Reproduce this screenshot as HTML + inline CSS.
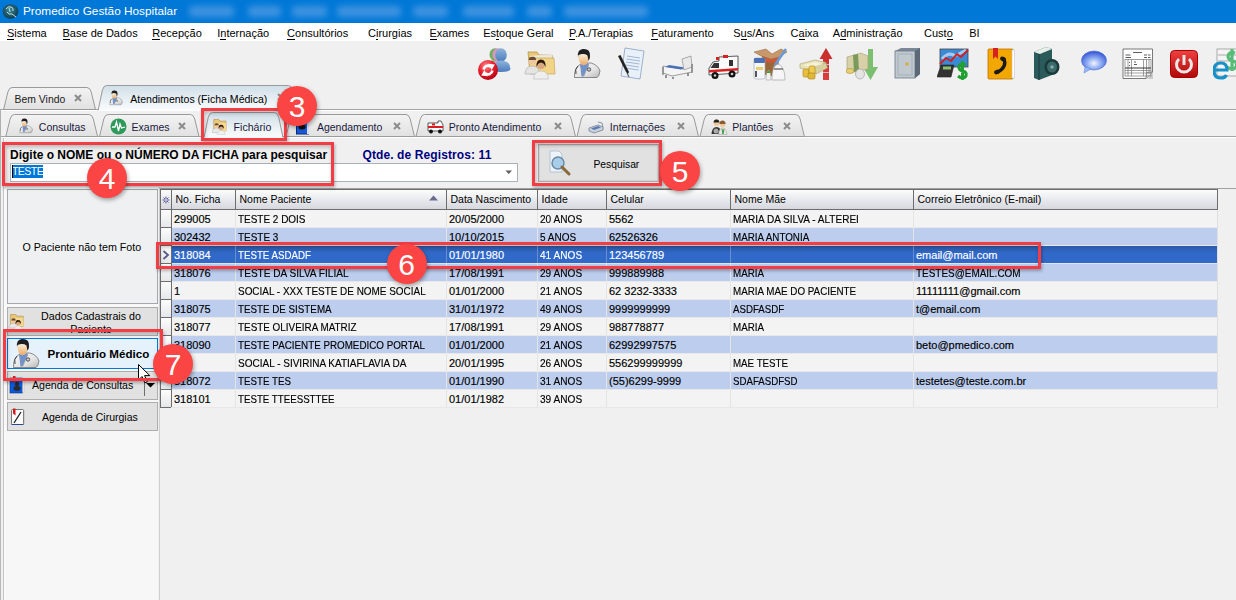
<!DOCTYPE html>
<html><head><meta charset="utf-8">
<style>
*{box-sizing:border-box;margin:0;padding:0}
html,body{width:1236px;height:600px;overflow:hidden;background:#f0f0f0;font-family:"Liberation Sans",sans-serif;position:relative}
.a{position:absolute;white-space:pre}
#title{left:0;top:0;width:1236px;height:23px;background:#0078d7}
#menu{left:0;top:23px;width:1236px;height:18px;background:#fff}
.mi{position:absolute;top:24.5px;font-size:11px;color:#000;line-height:16px}
.mi u{text-decoration:none;border-bottom:1px solid #000}
.tb{position:absolute;top:47px;width:32px;height:32px}
.tt{font-size:10.6px;color:#1a1a3a;line-height:13px}
.x{position:absolute;font-size:11px;font-weight:bold;color:#8a8a8a;line-height:11px}
.gh{position:absolute;top:190px;height:19px;font-size:10.5px;line-height:19px;color:#000;padding-left:4px}
.row{position:absolute;left:171px;width:1046px;height:18px}
.c{position:absolute;font-size:11px;line-height:18px;top:0;color:#000;-webkit-text-stroke:0.15px currentColor}
.ann{position:absolute;width:40px;height:40px;border-radius:50%;background:#fb4343;color:#fff;font-size:29px;line-height:40px;text-align:center;box-shadow:1px 2px 3px rgba(0,0,0,.35)}
.rb{position:absolute;border:3px solid #f2404a}
</style></head><body>
<!-- title bar -->
<div class="a" id="title"></div>
<svg class="a" style="left:2px;top:3px" width="17" height="17" viewBox="0 0 17 17"><defs><radialGradient id="gl" cx=".45" cy=".4" r=".6"><stop offset="0" stop-color="#3a8a9a"/><stop offset="1" stop-color="#0e3a4a"/></radialGradient></defs><ellipse cx="8.5" cy="8.5" rx="7.8" ry="7.3" fill="url(#gl)"/><path d="M4 6 Q6 3 9 4 Q12 5 11 8 M5 9 Q7 12 10 11 L14 14 M7 5 L8 9" stroke="#d8eef0" stroke-width="0.9" fill="none"/></svg>
<div class="a" style="left:23px;top:4px;font-size:11.8px;color:#fff;line-height:14px">Promedico Gestão Hospitalar</div>
<div class="a" style="left:0;top:0;width:1236px;height:23px;filter:blur(3.2px)">
  <div class="a" style="left:189px;top:6px;width:45px;height:11px;background:#3e93e0;border-radius:4px"></div>
  <div class="a" style="left:248px;top:6px;width:33px;height:11px;background:#3e93e0;border-radius:4px"></div>
  <div class="a" style="left:292px;top:6px;width:35px;height:11px;background:#3e93e0;border-radius:4px"></div>
  <div class="a" style="left:337px;top:6px;width:64px;height:11px;background:#3e93e0;border-radius:4px"></div>
  <div class="a" style="left:413px;top:6px;width:35px;height:11px;background:#3e93e0;border-radius:4px"></div>
  <div class="a" style="left:463px;top:6px;width:51px;height:11px;background:#3e93e0;border-radius:4px"></div>
  <div class="a" style="left:527px;top:6px;width:25px;height:11px;background:#3e93e0;border-radius:4px"></div>
  <div class="a" style="left:564px;top:6px;width:84px;height:11px;background:#3e93e0;border-radius:4px"></div>
</div>
<!-- menu -->
<div class="a" id="menu"></div>
<div class="mi" style="left:7px"><u>S</u>istema</div>
<div class="mi" style="left:62.5px"><u>B</u>ase de Dados</div>
<div class="mi" style="left:152.3px"><u>R</u>ecepção</div>
<div class="mi" style="left:217.2px">I<u>n</u>ternação</div>
<div class="mi" style="left:287.1px"><u>C</u>onsultórios</div>
<div class="mi" style="left:368px">C<u>i</u>rurgias</div>
<div class="mi" style="left:429.5px"><u>E</u>xames</div>
<div class="mi" style="left:483.2px">Es<u>t</u>oque Geral</div>
<div class="mi" style="left:569px"><u>P</u>.A./Terapias</div>
<div class="mi" style="left:651.2px"><u>F</u>aturamento</div>
<div class="mi" style="left:733.2px">S<u>u</u>s/Ans</div>
<div class="mi" style="left:790.6px">C<u>a</u>ixa</div>
<div class="mi" style="left:832.8px">A<u>d</u>ministração</div>
<div class="mi" style="left:924px">Cust<u>o</u></div>
<div class="mi" style="left:969.2px">BI</div>

<!-- toolbar icons -->
<svg class="a" style="left:478px;top:47px" width="33" height="34" viewBox="0 0 33 34"><defs><radialGradient id="rr" cx=".4" cy=".3" r=".75"><stop offset="0" stop-color="#ff8a8a"/><stop offset=".5" stop-color="#e82030"/><stop offset="1" stop-color="#b00010"/></radialGradient><linearGradient id="bp" x1="0" y1="0" x2="0" y2="1"><stop offset="0" stop-color="#90b4dc"/><stop offset="1" stop-color="#4a7cbc"/></linearGradient></defs>
<g fill="#72b060"><ellipse cx="17" cy="7.5" rx="5.5" ry="6.3"/><path d="M9.5 23 Q9 13.5 17 13 Q25 13.5 25 23 Z"/></g>
<g fill="#d898c0"><ellipse cx="20" cy="7.5" rx="5.5" ry="6.3"/><path d="M12.5 23 Q12 13.5 20 13 Q28 13.5 28 23 Z"/></g>
<g fill="url(#bp)"><ellipse cx="23" cy="8" rx="5.8" ry="6.8"/><path d="M15.5 24.5 Q15 14 23 13.5 Q32.5 14 32.5 22 Q32 25 23 25 Z"/></g>
<circle cx="10" cy="23" r="10" fill="url(#rr)"/>
<path d="M5.6 22.5 A4.4 4.4 0 0 1 12.6 19.6" stroke="#fff" stroke-width="2.6" fill="none"/><path d="M10.2 16.8 L16.8 17.6 L13.6 23 Z" fill="#fff"/><path d="M14.4 23.5 A4.4 4.4 0 0 1 7.4 26.4" stroke="#fff" stroke-width="2.6" fill="none"/><path d="M9.8 29.2 L3.2 28.4 L6.4 23 Z" fill="#fff"/></svg>
<svg class="a" style="left:524px;top:47px" width="33" height="33" viewBox="0 0 33 33"><path d="M4 5 L13 5 L15 8 L28 8 L30 26 L6 26 Z" fill="#e9c878" stroke="#b8944a" stroke-width="0.8"/>
<path d="M6 9 L28 7 L29 25 L7 26 Z" fill="#f0f0f0" opacity=".8"/><path d="M5 11 L30 11 L31 27 L6 27 Z" fill="#f2d488" stroke="#c0a050" stroke-width="0.6"/>
<circle cx="8.5" cy="14" r="3.8" fill="#f0c8a0"/><path d="M4.8 13 Q5 9.5 8.5 9.8 Q12 9.5 12 13 Z" fill="#6a4a30"/><path d="M1 27 Q1.5 19 8.5 19 Q15 19 15.5 27 Z" fill="#e4e4e4" stroke="#aaa" stroke-width="0.6"/>
<circle cx="17" cy="18" r="4" fill="#d8a880"/><path d="M12.5 20 Q12 12.5 17 12.5 Q22 12.5 21.5 20 L20 17 Q17 14 14 17 Z" fill="#2a1a10"/><path d="M9.5 32 Q10 24 17 24 Q24 24 24.5 32 Z" fill="#eee" stroke="#bbb" stroke-width="0.6"/></svg>
<svg class="a" style="left:569px;top:46px" width="36.0" height="34.0" viewBox="0 0 36 34"><defs><linearGradient id="coat1" x1="0" y1="0" x2="1" y2="1"><stop offset="0" stop-color="#fafafa"/><stop offset=".6" stop-color="#e4e4e4"/><stop offset="1" stop-color="#b8b8b8"/></linearGradient><linearGradient id="face1" x1="0" y1="0" x2="0" y2="1"><stop offset="0" stop-color="#fbe8c8"/><stop offset="1" stop-color="#e8a868"/></linearGradient></defs><path d="M5.5 31.5 Q5 22 11 18.5 L15 17 L22 17 Q29 19 31 25 Q30 31 28 31.5 Z" fill="url(#coat1)" stroke="#606060" stroke-width="0.7"/><path d="M11 18.5 L19 17 L20 19 L14.5 30.5 L12.5 30.5 Z" fill="#6d90d0"/><path d="M11 18.5 L15 30 M19.5 17.5 L15 30" stroke="#9a9a9a" stroke-width="0.6" fill="none"/><path d="M9 20 Q5.5 23 7 28" stroke="#404040" stroke-width="1" fill="none"/><circle cx="20" cy="23.5" r="1.7" fill="#d0d0d0" stroke="#404040" stroke-width="0.9"/><path d="M9.5 9 Q9 16 13 19 Q17 20 19 16 L19 9 Z" fill="url(#face1)"/><path d="M9 11 Q8 3.5 14 3 Q21 2.5 21 9 Q21.5 12 19.5 15 L18.5 9.5 Q15 7 9.5 9 Z" fill="#1e1e1e"/></svg>
<svg class="a" style="left:616px;top:47px" width="30" height="33" viewBox="0 0 30 33"><path d="M9 1 L28 4 L24 32 L5 29 Z" fill="#e8f0fa" stroke="#8aa0c0" stroke-width="0.8"/>
<g stroke="#9ab0cc" stroke-width="0.9"><path d="M11 9 L24 11 M10.5 12 L24 14 M10 15 L23.5 17 M9.5 18 L23 20 M9 21 L22.5 23"/></g>
<path d="M2 9 L4.5 8 L13 25 L12 27 L10 25 Z" fill="#222"/><path d="M11 26 L13 30" stroke="#444"/></svg>
<svg class="a" style="left:661px;top:55px" width="33" height="25" viewBox="0 0 33 25"><path d="M2 11 L22 14 L31 9 L31 17 L11 21 L2 18 Z" fill="#f4f4f4" stroke="#888" stroke-width="0.8"/>
<path d="M4 12 L20 14.5 L24 12.5 L8 10 Z" fill="#4a70b8"/><path d="M21 4 L30 1 L31 12 L23 15 Z" fill="#e8e8e8" stroke="#999" stroke-width="0.8"/>
<path d="M2 12 L2 20 M31 9 L31 18" stroke="#777" stroke-width="1.2"/><path d="M5 20 L5 23 M27 18 L27 21 M12 22 L12 24" stroke="#555" stroke-width="1.2"/></svg>
<svg class="a" style="left:707px;top:53px" width="33" height="28" viewBox="0 0 33 28"><path d="M12 4 L31 3 L31 20 L2 22 L2 15 L6 9 L12 8 Z" fill="#fafafa" stroke="#333" stroke-width="0.8"/>
<path d="M3.5 15 L7 10 L12 10 L12 15 Z" fill="#333"/><rect x="22" y="7" width="4" height="6" fill="#333"/>
<path d="M2 17 L31 15 L31 17.5 L2 19.5 Z" fill="#d82020"/><rect x="16" y="2" width="5" height="3" fill="#d82020"/><rect x="9" y="4" width="3" height="3" fill="#d82020"/>
<circle cx="8" cy="22.5" r="3.5" fill="#111"/><circle cx="25" cy="21" r="3.5" fill="#111"/><circle cx="8" cy="22.5" r="1.3" fill="#ccc"/><circle cx="25" cy="21" r="1.3" fill="#ccc"/></svg>
<svg class="a" style="left:753px;top:47px" width="34" height="34" viewBox="0 0 34 34"><path d="M1 5 L13 2 L19 7 L28 2 L34 5 L26 10 L18 12 L8 9 Z" fill="#c8986a" stroke="#8a6038" stroke-width="0.5"/>
<path d="M9 9 L18 12 L26 10 L25 25 L17 30 L10 27 Z" fill="#9a6838"/><path d="M11 10 L18 12.5 L25.5 10.5 L25.5 14 L18 16 L11 14 Z" fill="#d0583a"/>
<path d="M33 2 L22 18" stroke="#6a9ad8" stroke-width="2.6"/><path d="M22 18 L20 21" stroke="#aaa" stroke-width="1"/>
<rect x="1" y="11" width="11" height="21" rx="2" fill="#f4f6fa" stroke="#a0a8b0" stroke-width="0.6"/><rect x="1" y="11" width="11" height="5" rx="1" fill="#4a70b8"/><rect x="3" y="20" width="7" height="3" fill="#e8d070"/><rect x="2" y="24" width="2" height="6" fill="#555"/>
<path d="M13 33 Q13 25 15.5 23 Q18 25 18 33 Z" fill="#f0f0f0" stroke="#999" stroke-width="0.5"/><path d="M13.5 26 Q15.5 21 17.5 26 Z" fill="#40a040"/>
<path d="M19 33 Q18.5 19 25 17 Q32 19 32 33 Z" fill="#f6f6f6" stroke="#999" stroke-width="0.6"/><path d="M21 22 H30" stroke="#333" stroke-width="1"/></svg>
<svg class="a" style="left:799px;top:47px" width="34" height="34" viewBox="0 0 34 34"><defs><linearGradient id="ar" x1="0" y1="0" x2="0" y2="1"><stop offset="0" stop-color="#c82828"/><stop offset="1" stop-color="#d84040"/></linearGradient></defs>
<path d="M27 1 L33.5 12 L30 12 L30 33 L24 33 L24 12 L20.5 12 Z" fill="url(#ar)"/><path d="M24 17.5 H30 M24 25.5 H30" stroke="#e8b0b0" stroke-width="1"/>
<path d="M1 17 L16 13 L27 15.5 L27 19 L12 24 L1 21 Z" fill="#e8e2b8" stroke="#a8a070" stroke-width="0.6"/><path d="M12 20 L27 16 L28.5 21 L17 27 Z" fill="#d8d0a0" stroke="#a8a070" stroke-width="0.6"/>
<path d="M4 18 L16 15 L24 17 L12 20.5 Z" fill="#f4f0d8"/>
<rect x="4" y="22" width="6" height="8" rx="1.5" fill="#e8c040" stroke="#a88010" stroke-width="0.6"/><rect x="10" y="19" width="6" height="9" rx="1.5" fill="#f0cc50" stroke="#a88010" stroke-width="0.6"/><rect x="9" y="26" width="7" height="6" rx="1.5" fill="#e0b838" stroke="#a88010" stroke-width="0.6"/></svg>
<svg class="a" style="left:846px;top:49px" width="33" height="31" viewBox="0 0 33 31"><path d="M22 0 L27 0 L27 18 L32 18 L24.5 31 L17 18 L22 18 Z" fill="#7ac070"/>
<path d="M1 8 L15 4 L22 7 L22 20 L8 23 L1 20 Z" fill="#d8d0a8" stroke="#a89870" stroke-width="0.6"/><path d="M7 6 L12 5 L13 22 L8 23 Z" fill="#7a9a5a"/>
<ellipse cx="4" cy="22" rx="4" ry="2.5" fill="#e8d070" stroke="#a89040" stroke-width="0.6"/><ellipse cx="14" cy="25" rx="4.5" ry="5" fill="#e4e4e4" stroke="#999" stroke-width="0.6"/></svg>
<svg class="a" style="left:893px;top:47px" width="29" height="32" viewBox="0 0 29 32"><path d="M2 4 L8 1 L27 1 L27 27 L22 31 L2 31 Z" fill="#7a8898"/><rect x="2" y="4" width="20" height="27" fill="#c0c8d0" stroke="#6a7888" stroke-width="0.8"/>
<path d="M22 4 L27 1 L27 27 L22 31 Z" fill="#5a6878"/><rect x="5" y="7" width="14" height="21" fill="none" stroke="#a0a8b0" stroke-width="0.8"/><circle cx="14" cy="17" r="1.8" fill="#d8b040"/></svg>
<svg class="a" style="left:937px;top:47px" width="34" height="33" viewBox="0 0 34 33"><rect x="3" y="2" width="28" height="18" fill="#3a8ad8" stroke="#444" stroke-width="0.8"/><path d="M5 12 Q12 4 18 9 Q24 6 29 3" stroke="#e8f4ff" stroke-width="3" fill="none" opacity=".6"/>
<path d="M3 17 L9 11 L14 14 L20 7 L24 10 L31 3" stroke="#d02020" stroke-width="2" fill="none"/>
<path d="M0 30 L4 18 L17 18 L14 30 Z" fill="#333" stroke="#222" stroke-width="0.6"/><rect x="6" y="19.5" width="8" height="3" fill="#8ac070"/>
<path d="M29 18 Q24 15 22 19 Q21 23 26 24 Q30 25 29 29 Q26 33 21 29 M25.5 14 L25.5 33" stroke="#20a030" stroke-width="3" fill="none"/></svg>
<svg class="a" style="left:987px;top:48px" width="28" height="32" viewBox="0 0 28 32"><rect x="1" y="1" width="25" height="30" rx="1" fill="#f2a800" stroke="#c07000" stroke-width="0.8"/><rect x="25" y="2" width="2.5" height="28" fill="#fff" stroke="#bbb" stroke-width="0.5"/>
<path d="M6 0 L11 0 L11 11 L8.5 8.5 L6 11 Z" fill="#d82020"/>
<path d="M16.5 10.5 Q21 18 10.5 24.5" stroke="#1a1a1a" stroke-width="3.2" fill="none"/><ellipse cx="16" cy="11" rx="3" ry="2.2" fill="#1a1a1a" transform="rotate(30 16 11)"/><ellipse cx="10" cy="24" rx="3" ry="2.2" fill="#1a1a1a" transform="rotate(-20 10 24)"/></svg>
<svg class="a" style="left:1033px;top:47px" width="27" height="33" viewBox="0 0 27 33"><path d="M1 5 L13 0 L19 2 L19 28 L6 33 L1 31 Z" fill="#2a5a5a"/><path d="M1 5 L13 0 L19 2 L7 7 Z" fill="#e8eee8"/><path d="M6 7 L6 33" stroke="#1a3a3a"/>
<ellipse cx="19" cy="20" rx="7.5" ry="8" fill="#1a3a3a"/><ellipse cx="19" cy="20" rx="5" ry="5.5" fill="#3a6a6a"/><circle cx="19" cy="20" r="1.8" fill="#88aaaa"/></svg>
<svg class="a" style="left:1080px;top:50px" width="27" height="25" viewBox="0 0 27 25"><defs><radialGradient id="sb" cx=".5" cy=".65" r=".6"><stop offset="0" stop-color="#f0f4ff"/><stop offset=".5" stop-color="#8aa8f0"/><stop offset="1" stop-color="#3a5ad8"/></radialGradient></defs>
<ellipse cx="14" cy="10.5" rx="12.5" ry="9.5" fill="url(#sb)" stroke="#4a6ad8" stroke-width="0.6"/><path d="M5 17 L4 23 L11 19 Z" fill="#9ab8f4" stroke="#6a8ae0" stroke-width="0.6"/></svg>
<svg class="a" style="left:1122px;top:48px" width="32" height="32" viewBox="0 0 32 32"><path d="M1 1 L30.5 1 L30.5 24 L24 30.5 L1 30.5 Z" fill="#fff" stroke="#6a6a6a" stroke-width="0.9"/><path d="M24 30.5 L24.5 24.5 L30.5 24" fill="#e8e8e8" stroke="#6a6a6a" stroke-width="0.8"/><path d="M25 31 L31 25 L31 31 Z" fill="#ccc"/>
<g stroke="#333" stroke-width="0.8"><path d="M11 4.5 H20 M3.5 7 H8.5 M3.5 9.5 H9 M22 7 H25 M26 7 H28.5 M22 9.5 H25 M26 9.5 H28.5"/></g>
<g stroke="#777" stroke-width="0.7" fill="none"><rect x="3" y="11.5" width="26" height="16.5"/><path d="M6 11.5 V28 M9.5 11.5 V28 M21.5 11.5 V28 M24.5 11.5 V24 M27 11.5 V24 M3 22.5 H29 M3 25 H29"/></g>
<path d="M3 20 H29" stroke="#333" stroke-width="1"/><path d="M7.5 14 V15 M7.5 17 V18 M12 14 H14 M12 16.5 H15" stroke="#333" stroke-width="0.8"/></svg>
<svg class="a" style="left:1170px;top:50px" width="28" height="28" viewBox="0 0 28 28"><defs><linearGradient id="pw" x1="0" y1="0" x2="0" y2="1"><stop offset="0" stop-color="#f04040"/><stop offset="1" stop-color="#b00808"/></linearGradient></defs>
<rect x="0.5" y="0.5" width="27" height="27" rx="4" fill="url(#pw)" stroke="#a00"/><path d="M9 9 A7.5 7.5 0 1 0 19 9" stroke="#e8e8e8" stroke-width="3" fill="none"/><rect x="12.5" y="5" width="3" height="10" fill="#e8e8e8"/></svg>
<svg class="a" style="left:1213px;top:47px" width="23" height="33" viewBox="0 0 23 33"><rect x="4" y="2" width="26" height="27" fill="#f4f4f4" stroke="#999" stroke-width="0.8"/><path d="M5 8 L30 8 M5 14 L30 14" stroke="#aaa"/>
<path d="M22 6 Q16 4 15 9 Q15 13 20 14 Q25 15 23 20 Q20 24 14 20 M19 2 L19 24" stroke="#58bc78" stroke-width="3.2" fill="none"/>
<path d="M1 23 L14 23 Q14 16 8 16 Q1 16 1 23.5 Q1 31 8 31 Q12 31 13.5 28" stroke="#1890c8" stroke-width="3.2" fill="none"/></svg>
<!-- tabs svg -->
<svg class="a" style="left:0;top:80px" width="1236" height="60" viewBox="0 80 1236 60">
<defs>
<linearGradient id="gt" x1="0" y1="0" x2="0" y2="1"><stop offset="0" stop-color="#f3f3f3"/><stop offset="1" stop-color="#e1e1e1"/></linearGradient>
<linearGradient id="ga" x1="0" y1="0" x2="0" y2="1"><stop offset="0" stop-color="#d0dfe8"/><stop offset="1" stop-color="#fbfcfd"/></linearGradient>
</defs>
<line x1="0" y1="109.5" x2="1236" y2="109.5" stroke="#a6a6a6"/>
<line x1="0" y1="110.5" x2="1236" y2="110.5" stroke="#ffffff"/>
<line x1="0.5" y1="110" x2="0.5" y2="600" stroke="#b0b0b0"/>
<path d="M3.6 109.5 L7.9 92.0 Q9.1 87.5 12.1 87.5 L87.0 87.5 Q90.0 87.5 91.2 92.0 L95.5 109.5 Z" fill="url(#gt)" stroke="#9a9a9a"/>
<path d="M98.1 110.5 L102.39999999999999 90.0 Q103.6 85.5 106.6 85.5 L288.5 85.5 Q291.5 85.5 292.7 90.0 L297 110.5 Z" fill="url(#ga)" stroke="none"/><path d="M98.1 110.5 L102.39999999999999 90.0 Q103.6 85.5 106.6 85.5 L288.5 85.5 Q291.5 85.5 292.7 90.0 L297 110.5" fill="none" stroke="#9a9a9a"/>
<line x1="1" y1="136.5" x2="1236" y2="136.5" stroke="#a6a6a6"/>
<line x1="1" y1="137.5" x2="1236" y2="137.5" stroke="#ffffff"/>
<path d="M5.8 136.5 L10.1 119.0 Q11.3 114.5 14.3 114.5 L89.1 114.5 Q92.1 114.5 93.3 119.0 L97.6 136.5 Z" fill="url(#gt)" stroke="#9a9a9a"/>
<path d="M99.5 136.5 L103.8 119.0 Q105.0 114.5 108.0 114.5 L190.5 114.5 Q193.5 114.5 194.7 119.0 L199 136.5 Z" fill="url(#gt)" stroke="#9a9a9a"/>
<path d="M286 136.5 L290.3 119.0 Q291.5 114.5 294.5 114.5 L406.0 114.5 Q409.0 114.5 410.2 119.0 L414.5 136.5 Z" fill="url(#gt)" stroke="#9a9a9a"/>
<path d="M416 136.5 L420.3 119.0 Q421.5 114.5 424.5 114.5 L567.0 114.5 Q570.0 114.5 571.2 119.0 L575.5 136.5 Z" fill="url(#gt)" stroke="#9a9a9a"/>
<path d="M577 136.5 L581.3 119.0 Q582.5 114.5 585.5 114.5 L690.0 114.5 Q693.0 114.5 694.2 119.0 L698.5 136.5 Z" fill="url(#gt)" stroke="#9a9a9a"/>
<path d="M700 136.5 L704.3 119.0 Q705.5 114.5 708.5 114.5 L795.9 114.5 Q798.9 114.5 800.1 119.0 L804.4 136.5 Z" fill="url(#gt)" stroke="#9a9a9a"/>
<path d="M204 137.5 L208.3 117.0 Q209.5 112.5 212.5 112.5 L274.5 112.5 Q277.5 112.5 278.7 117.0 L283 137.5 Z" fill="url(#ga)" stroke="none"/><path d="M204 137.5 L208.3 117.0 Q209.5 112.5 212.5 112.5 L274.5 112.5 Q277.5 112.5 278.7 117.0 L283 137.5" fill="none" stroke="#9a9a9a"/>
</svg>
<div class="a" style="left:14.6px;top:93.46px;font-size:10.4px;line-height:13px;color:#202020">Bem Vindo</div>
<svg class="a" style="left:74px;top:94px" width="8" height="8" viewBox="0 0 8 8"><path d="M1 1 L7 7 M7 1 L1 7" stroke="#8c8c8c" stroke-width="2"/></svg>
<div class="a" style="left:130.2px;top:93.41px;font-size:10.55px;line-height:13px;color:#000">Atendimentos (Ficha Médica)</div>
<svg class="a" style="left:277px;top:93px" width="8" height="8" viewBox="0 0 8 8"><path d="M1 1 L7 7 M7 1 L1 7" stroke="#8c8c8c" stroke-width="2"/></svg>
<svg class="a" style="left:106.5px;top:88.5px" width="18.0" height="17.0" viewBox="0 0 36 34"><defs><linearGradient id="coat1" x1="0" y1="0" x2="1" y2="1"><stop offset="0" stop-color="#fafafa"/><stop offset=".6" stop-color="#e4e4e4"/><stop offset="1" stop-color="#b8b8b8"/></linearGradient><linearGradient id="face1" x1="0" y1="0" x2="0" y2="1"><stop offset="0" stop-color="#fbe8c8"/><stop offset="1" stop-color="#e8a868"/></linearGradient></defs><path d="M5.5 31.5 Q5 22 11 18.5 L15 17 L22 17 Q29 19 31 25 Q30 31 28 31.5 Z" fill="url(#coat1)" stroke="#606060" stroke-width="0.7"/><path d="M11 18.5 L19 17 L20 19 L14.5 30.5 L12.5 30.5 Z" fill="#6d90d0"/><path d="M11 18.5 L15 30 M19.5 17.5 L15 30" stroke="#9a9a9a" stroke-width="0.6" fill="none"/><path d="M9 20 Q5.5 23 7 28" stroke="#404040" stroke-width="1" fill="none"/><circle cx="20" cy="23.5" r="1.7" fill="#d0d0d0" stroke="#404040" stroke-width="0.9"/><path d="M9.5 9 Q9 16 13 19 Q17 20 19 16 L19 9 Z" fill="url(#face1)"/><path d="M9 11 Q8 3.5 14 3 Q21 2.5 21 9 Q21.5 12 19.5 15 L18.5 9.5 Q15 7 9.5 9 Z" fill="#1e1e1e"/></svg>
<svg class="a" style="left:16.5px;top:116.5px" width="18.0" height="17.0" viewBox="0 0 36 34"><defs><linearGradient id="coat2" x1="0" y1="0" x2="1" y2="1"><stop offset="0" stop-color="#fafafa"/><stop offset=".6" stop-color="#e4e4e4"/><stop offset="1" stop-color="#b8b8b8"/></linearGradient><linearGradient id="face2" x1="0" y1="0" x2="0" y2="1"><stop offset="0" stop-color="#fbe8c8"/><stop offset="1" stop-color="#e8a868"/></linearGradient></defs><path d="M5.5 31.5 Q5 22 11 18.5 L15 17 L22 17 Q29 19 31 25 Q30 31 28 31.5 Z" fill="url(#coat2)" stroke="#606060" stroke-width="0.7"/><path d="M11 18.5 L19 17 L20 19 L14.5 30.5 L12.5 30.5 Z" fill="#6d90d0"/><path d="M11 18.5 L15 30 M19.5 17.5 L15 30" stroke="#9a9a9a" stroke-width="0.6" fill="none"/><path d="M9 20 Q5.5 23 7 28" stroke="#404040" stroke-width="1" fill="none"/><circle cx="20" cy="23.5" r="1.7" fill="#d0d0d0" stroke="#404040" stroke-width="0.9"/><path d="M9.5 9 Q9 16 13 19 Q17 20 19 16 L19 9 Z" fill="url(#face2)"/><path d="M9 11 Q8 3.5 14 3 Q21 2.5 21 9 Q21.5 12 19.5 15 L18.5 9.5 Q15 7 9.5 9 Z" fill="#1e1e1e"/></svg>
<div class="a" style="left:38.8px;top:120.83px;font-size:10.5px;line-height:13px;color:#1a1a40">Consultas</div>
<svg class="a" style="left:109.5px;top:118px" width="17" height="17" viewBox="0 0 17 17"><circle cx="8.5" cy="8.5" r="8" fill="#2e9a5a"/><path d="M2 9 L5 9 L6.5 4 L8.5 13 L10 6 L11.5 10 L15 9" stroke="#fff" stroke-width="1.3" fill="none"/></svg>
<div class="a" style="left:131.6px;top:120.83px;font-size:10.5px;line-height:13px;color:#1a1a40">Exames</div>
<svg class="a" style="left:178px;top:121.5px" width="8" height="8" viewBox="0 0 8 8"><path d="M1 1 L7 7 M7 1 L1 7" stroke="#8c8c8c" stroke-width="2"/></svg>
<svg class="a" style="left:211px;top:117px" width="17" height="18" viewBox="0 0 20 22"><path d="M3 3 L9 3 L10.5 5 L18 5 L18 17 L3 17 Z" fill="#e9c878" stroke="#b08a40" stroke-width="0.7"/><path d="M4 7 L18 7 L18.5 17 L4 17 Z" fill="#f4d890"/><circle cx="6.5" cy="10.5" r="2.6" fill="#f0c8a0"/><path d="M3.8 10 Q4 7.3 6.5 7.5 Q9 7.3 9.2 10 Z" fill="#6a4a30"/><path d="M1 19 Q1.5 13.5 6.5 13.5 Q11 13.5 11.5 19 Z" fill="#e8e8e8" stroke="#aaa" stroke-width="0.5"/><circle cx="12" cy="13" r="2.8" fill="#d8a880"/><path d="M8.8 14.5 Q8.5 9.5 12 9.5 Q15.5 9.5 15.2 14.5 L14 12.5 Q12 10.5 10 12.5 Z" fill="#2a1a10"/><path d="M7 21.5 Q7.5 16.5 12 16.5 Q16.5 16.5 17 21.5 Z" fill="#f0f0f0" stroke="#bbb" stroke-width="0.5"/></svg>
<div class="a" style="left:233.6px;top:120.80px;font-size:10.6px;line-height:13px;color:#1a1a40">Fichário</div>
<svg class="a" style="left:295.5px;top:118px" width="14" height="17" viewBox="0 0 14 17"><rect x="0.5" y="0.5" width="12" height="15.5" fill="#1a5ad8" stroke="#0a2a80"/><rect x="11" y="1" width="2" height="15" fill="#dde"/><ellipse cx="6" cy="9" rx="3.5" ry="2.5" fill="#111"/><rect x="3" y="0" width="3" height="4" fill="#222"/></svg>
<div class="a" style="left:316.9px;top:120.83px;font-size:10.5px;line-height:13px;color:#1a1a40">Agendamento</div>
<svg class="a" style="left:392.5px;top:121.5px" width="8" height="8" viewBox="0 0 8 8"><path d="M1 1 L7 7 M7 1 L1 7" stroke="#8c8c8c" stroke-width="2"/></svg>
<svg class="a" style="left:426.5px;top:119px" width="17" height="15" viewBox="0 0 17 15"><path d="M1 4 L11 4 L11 2 L14 2 L16 6 L16 12 L1 12 Z" fill="#fff" stroke="#333" stroke-width="0.8"/><rect x="1" y="7" width="15" height="2" fill="#d82020"/><rect x="5" y="4.5" width="3" height="2" fill="#d82020"/><circle cx="4" cy="12.5" r="2" fill="#111"/><circle cx="13" cy="12.5" r="2" fill="#111"/></svg>
<div class="a" style="left:448.7px;top:120.81px;font-size:10.55px;line-height:13px;color:#1a1a40">Pronto Atendimento</div>
<svg class="a" style="left:553.5px;top:121.5px" width="8" height="8" viewBox="0 0 8 8"><path d="M1 1 L7 7 M7 1 L1 7" stroke="#8c8c8c" stroke-width="2"/></svg>
<svg class="a" style="left:588px;top:120px" width="16" height="14" viewBox="0 0 16 14"><path d="M1 8 L10 5 L15 7 L15 10 L6 13 L1 11 Z" fill="#c8d0dc" stroke="#7a8494" stroke-width="0.8"/><path d="M3 8.5 L10 6 L13 7.5 L6 10 Z" fill="#5a7ab8"/><path d="M10 2 L14 3 L15 7" stroke="#8a94a4" fill="none"/></svg>
<div class="a" style="left:609.8px;top:120.80px;font-size:10.6px;line-height:13px;color:#1a1a40">Internações</div>
<svg class="a" style="left:676.5px;top:121.5px" width="8" height="8" viewBox="0 0 8 8"><path d="M1 1 L7 7 M7 1 L1 7" stroke="#8c8c8c" stroke-width="2"/></svg>
<svg class="a" style="left:710.5px;top:118px" width="17" height="17" viewBox="0 0 17 17"><circle cx="5.5" cy="5" r="3" fill="#f0c898"/><path d="M2.5 4.5 Q3 1 5.5 1.5 Q8 1 8.5 4.5 Z" fill="#222"/><path d="M0.5 16 Q1 9 5.5 9 Q10 9 10.5 16 Z" fill="#333"/><circle cx="5" cy="13" r="2.5" fill="#aaa"/><circle cx="11.5" cy="6" r="3" fill="#f0c898"/><path d="M8.5 6 Q8.5 2.5 11.5 2.5 Q14.5 2.5 14.5 6 Z" fill="#8a5a30"/><path d="M7.5 16.5 Q8 10 11.5 10 Q15 10 16 16.5 Z" fill="#e8e8e8" stroke="#999" stroke-width="0.5"/><path d="M11 11 L12 16 L13 11" stroke="#3a9a3a" fill="none"/></svg>
<div class="a" style="left:732.3px;top:120.83px;font-size:10.5px;line-height:13px;color:#1a1a40">Plantões</div>
<svg class="a" style="left:782.5px;top:121.5px" width="8" height="8" viewBox="0 0 8 8"><path d="M1 1 L7 7 M7 1 L1 7" stroke="#8c8c8c" stroke-width="2"/></svg>
<div class="a" style="left:0;top:138px;width:1px;height:462px;background:#b8b8b8"></div>
<div class="a" style="left:3px;top:138px;width:1px;height:462px;background:#c4c4c4"></div>
<div class="a" style="left:4px;top:138px;width:1px;height:462px;background:#fafafa"></div>
<div class="a" style="left:5px;top:187px;width:153px;height:413px;background:#f7f7f7"></div>
<div class="a" style="left:159px;top:187px;width:1px;height:413px;background:#cfcfcf"></div>
<div class="a" style="left:10px;top:149px;font-size:12px;font-weight:bold;line-height:12px;color:#000">Digite o NOME ou o NÚMERO DA FICHA para pesquisar</div>
<div class="a" style="left:362.5px;top:149px;font-size:12px;font-weight:bold;line-height:12px;color:#000080;letter-spacing:0.1px">Qtde. de Registros: 11</div>
<div class="a" style="left:10px;top:163px;width:508px;height:19px;background:#fff;border:1px solid #a9b1b9"></div>
<div class="a" style="left:12.5px;top:165px;width:30.5px;height:13px;background:#0078d7"></div>
<div class="a" style="left:12px;top:165px;font-size:10.6px;line-height:13px;color:#fff;letter-spacing:-0.6px">TESTE</div>
<div class="a" style="left:12px;top:165px;width:1px;height:13px;background:#000"></div>
<svg class="a" style="left:505px;top:170px" width="8" height="5"><path d="M0.5 0.5 L7 0.5 L3.75 4 Z" fill="#606060"/></svg>
<div class="a" style="left:537.5px;top:144px;width:121.5px;height:38px;background:#e1e1e1;border:1px solid #adadad;box-shadow:inset 0 0 0 1px #d4d4d4"></div>
<svg class="a" style="left:547px;top:150px" width="28" height="26" viewBox="0 0 28 26"><path d="M3 1 L12 1 L15 4 L15 22 L3 22 Z" fill="#eef3f9" stroke="#b5c2d0"/><circle cx="11" cy="13" r="6" fill="#a8cde8" stroke="#6a8aa8" stroke-width="1.5"/><path d="M15 17 L22 24" stroke="#8a6a3a" stroke-width="3" stroke-linecap="round"/></svg>
<div class="a" style="left:593.5px;top:158px;font-size:10.3px;line-height:13px;color:#000">Pesquisar</div>
<div class="a" style="left:7px;top:189px;width:151px;height:115px;background:#eff0f2;border:1px solid #a4a8ac"></div>
<div class="a" style="left:22.4px;top:241px;font-size:10.7px;line-height:13px;color:#000">O Paciente não tem Foto</div>
<div class="a" style="left:7px;top:307px;width:151px;height:29px;background:#e1e1e1;border:1px solid #adadad;overflow:hidden"><div class="a" style="left:33px;top:1.5px;font-size:10.7px;line-height:13px;color:#000;width:100px;text-align:center">Dados Cadastrais do
Paciente</div></div>
<svg class="a" style="left:8px;top:311.5px" width="17" height="18.5" viewBox="0 0 20 22"><path d="M3 3 L9 3 L10.5 5 L18 5 L18 17 L3 17 Z" fill="#e9c878" stroke="#b08a40" stroke-width="0.7"/><path d="M4 7 L18 7 L18.5 17 L4 17 Z" fill="#f4d890"/><circle cx="6.5" cy="10.5" r="2.6" fill="#f0c8a0"/><path d="M3.8 10 Q4 7.3 6.5 7.5 Q9 7.3 9.2 10 Z" fill="#6a4a30"/><path d="M1 19 Q1.5 13.5 6.5 13.5 Q11 13.5 11.5 19 Z" fill="#e8e8e8" stroke="#aaa" stroke-width="0.5"/><circle cx="12" cy="13" r="2.8" fill="#d8a880"/><path d="M8.8 14.5 Q8.5 9.5 12 9.5 Q15.5 9.5 15.2 14.5 L14 12.5 Q12 10.5 10 12.5 Z" fill="#2a1a10"/><path d="M7 21.5 Q7.5 16.5 12 16.5 Q16.5 16.5 17 21.5 Z" fill="#f0f0f0" stroke="#bbb" stroke-width="0.5"/></svg>
<div class="a" style="left:7px;top:338px;width:151px;height:31px;background:#e5f1fb;border:1px solid #0078d7"></div>
<svg class="a" style="left:8px;top:336px" width="36.0" height="34.0" viewBox="0 0 36 34"><defs><linearGradient id="coat1" x1="0" y1="0" x2="1" y2="1"><stop offset="0" stop-color="#fafafa"/><stop offset=".6" stop-color="#e4e4e4"/><stop offset="1" stop-color="#b8b8b8"/></linearGradient><linearGradient id="face1" x1="0" y1="0" x2="0" y2="1"><stop offset="0" stop-color="#fbe8c8"/><stop offset="1" stop-color="#e8a868"/></linearGradient></defs><path d="M5.5 31.5 Q5 22 11 18.5 L15 17 L22 17 Q29 19 31 25 Q30 31 28 31.5 Z" fill="url(#coat1)" stroke="#606060" stroke-width="0.7"/><path d="M11 18.5 L19 17 L20 19 L14.5 30.5 L12.5 30.5 Z" fill="#6d90d0"/><path d="M11 18.5 L15 30 M19.5 17.5 L15 30" stroke="#9a9a9a" stroke-width="0.6" fill="none"/><path d="M9 20 Q5.5 23 7 28" stroke="#404040" stroke-width="1" fill="none"/><circle cx="20" cy="23.5" r="1.7" fill="#d0d0d0" stroke="#404040" stroke-width="0.9"/><path d="M9.5 9 Q9 16 13 19 Q17 20 19 16 L19 9 Z" fill="url(#face1)"/><path d="M9 11 Q8 3.5 14 3 Q21 2.5 21 9 Q21.5 12 19.5 15 L18.5 9.5 Q15 7 9.5 9 Z" fill="#1e1e1e"/></svg>
<div class="a" style="left:47.5px;top:347px;font-size:11.6px;font-weight:bold;line-height:13px;color:#000">Prontuário Médico</div>
<div class="a" style="left:7px;top:371px;width:151px;height:29px;background:#e1e1e1;border:1px solid #adadad"></div>
<div class="a" style="left:143.5px;top:377px;width:1px;height:19px;background:#6d6d6d"></div>
<svg class="a" style="left:146px;top:383px" width="10" height="5"><path d="M0 0 L9 0 L4.5 4.5 Z" fill="#000"/></svg>
<svg class="a" style="left:9px;top:375px" width="16" height="20" viewBox="0 0 16 20"><rect x="1" y="3" width="12.5" height="15" fill="#0a5ae0" stroke="#08308a" stroke-width="0.6"/><rect x="13.5" y="3.5" width="1.5" height="14" fill="#f4f4f4" stroke="#aaa" stroke-width="0.4"/><circle cx="8" cy="9" r="2.2" fill="#2a2a2a"/><ellipse cx="8" cy="13.5" rx="3.6" ry="2.4" fill="#2a2a2a"/><path d="M4 1 L6.5 1 L6.5 8 L5.25 6.5 L4 8 Z" fill="#d02020"/></svg>
<div class="a" style="left:32px;top:379px;font-size:10.6px;line-height:13px;color:#000">Agenda de Consultas</div>
<div class="a" style="left:7px;top:402px;width:151px;height:29px;background:#e1e1e1;border:1px solid #adadad"></div>
<svg class="a" style="left:10px;top:408px" width="16" height="18" viewBox="0 0 16 18"><rect x="1.5" y="1.5" width="12" height="15" rx="1" fill="#fafafa" stroke="#555" stroke-width="0.8"/><path d="M14 2.5 V16" stroke="#999" stroke-width="1" stroke-dasharray="1 1"/><rect x="1.5" y="16" width="12" height="1" fill="#2a4a90"/><path d="M3 0.5 L5.5 0.5 L5.5 7.5 L3 5.5 Z" fill="#d81818"/><path d="M4 15 L11 4" stroke="#111" stroke-width="1.2"/></svg>
<div class="a" style="left:42px;top:411px;font-size:10.5px;line-height:13px;color:#000">Agenda de Cirurgias</div>
<div class="a" style="left:160px;top:188px;width:1076px;height:1px;background:#a0a0a0"></div>
<div class="a" style="left:160px;top:189px;width:1058px;height:21px;border:1px solid #6d6d6d;background:linear-gradient(#fcfcfc,#e9eaee 50%,#d6d8de)"></div>
<div class="a" style="left:171px;top:190px;width:1px;height:19px;background:#6d6d6d"></div>
<div class="a" style="left:235px;top:190px;width:1px;height:19px;background:#6d6d6d"></div>
<div class="a" style="left:446px;top:190px;width:1px;height:19px;background:#6d6d6d"></div>
<div class="a" style="left:537px;top:190px;width:1px;height:19px;background:#6d6d6d"></div>
<div class="a" style="left:606px;top:190px;width:1px;height:19px;background:#6d6d6d"></div>
<div class="a" style="left:730px;top:190px;width:1px;height:19px;background:#6d6d6d"></div>
<div class="a" style="left:913px;top:190px;width:1px;height:19px;background:#6d6d6d"></div>
<svg class="a" style="left:161.5px;top:195.5px" width="8" height="8" viewBox="0 0 8 8"><g stroke="#5a5a92" stroke-width="1"><path d="M4 0.5 V7.5 M0.5 4 H7.5 M1.5 1.5 L6.5 6.5 M6.5 1.5 L1.5 6.5"/></g><circle cx="4" cy="4" r="0.9" fill="#e8e8f0"/></svg>
<div class="a" style="left:175.5px;top:193px;font-size:10.5px;line-height:13px;color:#000">No. Ficha</div>
<div class="a" style="left:239.5px;top:193px;font-size:10.5px;line-height:13px;color:#000">Nome Paciente</div>
<div class="a" style="left:450.5px;top:193px;font-size:10.5px;line-height:13px;color:#000">Data Nascimento</div>
<div class="a" style="left:541.5px;top:193px;font-size:10.5px;line-height:13px;color:#000">Idade</div>
<div class="a" style="left:610.5px;top:193px;font-size:10.5px;line-height:13px;color:#000">Celular</div>
<div class="a" style="left:734.5px;top:193px;font-size:10.5px;line-height:13px;color:#000">Nome Mãe</div>
<div class="a" style="left:917.5px;top:193px;font-size:10.5px;line-height:13px;color:#000">Correio Eletrônico (E-mail)</div>
<svg class="a" style="left:429px;top:195px" width="10" height="6"><path d="M0 5.5 L9 5.5 L4.5 0.5 Z" fill="#6a6a90"/></svg>
<div class="a" style="left:171px;top:210px;width:1046px;height:18px;background:#f2f3f2"></div>
<div class="a" style="left:160px;top:209px;width:12px;height:19px;border:1px solid #6d6d6d;background:linear-gradient(#fdfdfd,#e6e7ea)"></div>
<div class="a" style="left:235px;top:210px;width:1px;height:18px;background:#e4e4e4"></div>
<div class="a" style="left:446px;top:210px;width:1px;height:18px;background:#e4e4e4"></div>
<div class="a" style="left:537px;top:210px;width:1px;height:18px;background:#e4e4e4"></div>
<div class="a" style="left:606px;top:210px;width:1px;height:18px;background:#e4e4e4"></div>
<div class="a" style="left:730px;top:210px;width:1px;height:18px;background:#e4e4e4"></div>
<div class="a" style="left:913px;top:210px;width:1px;height:18px;background:#e4e4e4"></div>
<div class="a" style="left:171px;top:227px;width:1046px;height:1px;background:#e8e8e8"></div>
<div class="c" style="left:174px;top:210px;color:#000">299005</div>
<div class="c" style="left:238px;top:210px;color:#000;transform:scaleX(0.905);transform-origin:0 0">TESTE 2 DOIS</div>
<div class="c" style="left:449px;top:210px;color:#000">20/05/2000</div>
<div class="c" style="left:540px;top:210px;color:#000;transform:scaleX(0.919);transform-origin:0 0">20 ANOS</div>
<div class="c" style="left:609px;top:210px;color:#000">5562</div>
<div class="c" style="left:733px;top:210px;color:#000;transform:scaleX(0.911);transform-origin:0 0">MARIA DA SILVA - ALTEREI</div>
<div class="a" style="left:171px;top:228px;width:1046px;height:18px;background:#bccdee"></div>
<div class="a" style="left:160px;top:227px;width:12px;height:19px;border:1px solid #6d6d6d;background:linear-gradient(#fdfdfd,#e6e7ea)"></div>
<div class="a" style="left:235px;top:228px;width:1px;height:18px;background:#e4e4e4"></div>
<div class="a" style="left:446px;top:228px;width:1px;height:18px;background:#e4e4e4"></div>
<div class="a" style="left:537px;top:228px;width:1px;height:18px;background:#e4e4e4"></div>
<div class="a" style="left:606px;top:228px;width:1px;height:18px;background:#e4e4e4"></div>
<div class="a" style="left:730px;top:228px;width:1px;height:18px;background:#e4e4e4"></div>
<div class="a" style="left:913px;top:228px;width:1px;height:18px;background:#e4e4e4"></div>
<div class="a" style="left:171px;top:245px;width:1046px;height:1px;background:#e8e8e8"></div>
<div class="c" style="left:174px;top:228px;color:#000">302432</div>
<div class="c" style="left:238px;top:228px;color:#000;transform:scaleX(0.905);transform-origin:0 0">TESTE 3</div>
<div class="c" style="left:449px;top:228px;color:#000">10/10/2015</div>
<div class="c" style="left:540px;top:228px;color:#000;transform:scaleX(0.907);transform-origin:0 0">5 ANOS</div>
<div class="c" style="left:609px;top:228px;color:#000">62526326</div>
<div class="c" style="left:733px;top:228px;color:#000;transform:scaleX(0.893);transform-origin:0 0">MARIA ANTONIA</div>
<div class="a" style="left:171px;top:246px;width:1046px;height:18px;background:linear-gradient(#2b5aa8,#3169c8 40%,#3169c8)"></div>
<div class="a" style="left:160px;top:245px;width:12px;height:19px;border:1px solid #6d6d6d;background:linear-gradient(#fdfdfd,#e6e7ea)"></div>
<div class="a" style="left:235px;top:246px;width:1px;height:18px;background:#6a8cd0"></div>
<div class="a" style="left:446px;top:246px;width:1px;height:18px;background:#6a8cd0"></div>
<div class="a" style="left:537px;top:246px;width:1px;height:18px;background:#6a8cd0"></div>
<div class="a" style="left:606px;top:246px;width:1px;height:18px;background:#6a8cd0"></div>
<div class="a" style="left:730px;top:246px;width:1px;height:18px;background:#6a8cd0"></div>
<div class="a" style="left:913px;top:246px;width:1px;height:18px;background:#6a8cd0"></div>
<div class="a" style="left:171px;top:263px;width:1046px;height:1px;background:#dfe6f2"></div>
<div class="c" style="left:174px;top:246px;color:#fff">318084</div>
<div class="c" style="left:238px;top:246px;color:#fff;transform:scaleX(0.884);transform-origin:0 0">TESTE ASDADF</div>
<div class="c" style="left:449px;top:246px;color:#fff">01/01/1980</div>
<div class="c" style="left:540px;top:246px;color:#fff;transform:scaleX(0.919);transform-origin:0 0">41 ANOS</div>
<div class="c" style="left:609px;top:246px;color:#fff">123456789</div>
<div class="c" style="left:916px;top:246px;color:#fff">email@mail.com</div>
<div class="a" style="left:171px;top:264px;width:1046px;height:18px;background:#bccdee"></div>
<div class="a" style="left:160px;top:263px;width:12px;height:19px;border:1px solid #6d6d6d;background:linear-gradient(#fdfdfd,#e6e7ea)"></div>
<div class="a" style="left:235px;top:264px;width:1px;height:18px;background:#e4e4e4"></div>
<div class="a" style="left:446px;top:264px;width:1px;height:18px;background:#e4e4e4"></div>
<div class="a" style="left:537px;top:264px;width:1px;height:18px;background:#e4e4e4"></div>
<div class="a" style="left:606px;top:264px;width:1px;height:18px;background:#e4e4e4"></div>
<div class="a" style="left:730px;top:264px;width:1px;height:18px;background:#e4e4e4"></div>
<div class="a" style="left:913px;top:264px;width:1px;height:18px;background:#e4e4e4"></div>
<div class="a" style="left:171px;top:281px;width:1046px;height:1px;background:#e8e8e8"></div>
<div class="c" style="left:174px;top:264px;color:#000">318076</div>
<div class="c" style="left:238px;top:264px;color:#000;transform:scaleX(0.916);transform-origin:0 0">TESTE DA SILVA FILIAL</div>
<div class="c" style="left:449px;top:264px;color:#000">17/08/1991</div>
<div class="c" style="left:540px;top:264px;color:#000;transform:scaleX(0.919);transform-origin:0 0">29 ANOS</div>
<div class="c" style="left:609px;top:264px;color:#000">999889988</div>
<div class="c" style="left:733px;top:264px;color:#000;transform:scaleX(0.891);transform-origin:0 0">MARIA</div>
<div class="c" style="left:916px;top:264px;color:#000;transform:scaleX(0.904);transform-origin:0 0">TESTES@EMAIL.COM</div>
<div class="a" style="left:171px;top:282px;width:1046px;height:18px;background:#f2f3f2"></div>
<div class="a" style="left:160px;top:281px;width:12px;height:19px;border:1px solid #6d6d6d;background:linear-gradient(#fdfdfd,#e6e7ea)"></div>
<div class="a" style="left:235px;top:282px;width:1px;height:18px;background:#e4e4e4"></div>
<div class="a" style="left:446px;top:282px;width:1px;height:18px;background:#e4e4e4"></div>
<div class="a" style="left:537px;top:282px;width:1px;height:18px;background:#e4e4e4"></div>
<div class="a" style="left:606px;top:282px;width:1px;height:18px;background:#e4e4e4"></div>
<div class="a" style="left:730px;top:282px;width:1px;height:18px;background:#e4e4e4"></div>
<div class="a" style="left:913px;top:282px;width:1px;height:18px;background:#e4e4e4"></div>
<div class="a" style="left:171px;top:299px;width:1046px;height:1px;background:#e8e8e8"></div>
<div class="c" style="left:174px;top:282px;color:#000">1</div>
<div class="c" style="left:238px;top:282px;color:#000;transform:scaleX(0.903);transform-origin:0 0">SOCIAL - XXX TESTE DE NOME SOCIAL</div>
<div class="c" style="left:449px;top:282px;color:#000">01/01/2000</div>
<div class="c" style="left:540px;top:282px;color:#000;transform:scaleX(0.919);transform-origin:0 0">21 ANOS</div>
<div class="c" style="left:609px;top:282px;color:#000">62 3232-3333</div>
<div class="c" style="left:733px;top:282px;color:#000;transform:scaleX(0.893);transform-origin:0 0">MARIA MAE DO PACIENTE</div>
<div class="c" style="left:916px;top:282px;color:#000">11111111@gmail.com</div>
<div class="a" style="left:171px;top:300px;width:1046px;height:18px;background:#bccdee"></div>
<div class="a" style="left:160px;top:299px;width:12px;height:19px;border:1px solid #6d6d6d;background:linear-gradient(#fdfdfd,#e6e7ea)"></div>
<div class="a" style="left:235px;top:300px;width:1px;height:18px;background:#e4e4e4"></div>
<div class="a" style="left:446px;top:300px;width:1px;height:18px;background:#e4e4e4"></div>
<div class="a" style="left:537px;top:300px;width:1px;height:18px;background:#e4e4e4"></div>
<div class="a" style="left:606px;top:300px;width:1px;height:18px;background:#e4e4e4"></div>
<div class="a" style="left:730px;top:300px;width:1px;height:18px;background:#e4e4e4"></div>
<div class="a" style="left:913px;top:300px;width:1px;height:18px;background:#e4e4e4"></div>
<div class="a" style="left:171px;top:317px;width:1046px;height:1px;background:#e8e8e8"></div>
<div class="c" style="left:174px;top:300px;color:#000">318075</div>
<div class="c" style="left:238px;top:300px;color:#000;transform:scaleX(0.890);transform-origin:0 0">TESTE DE SISTEMA</div>
<div class="c" style="left:449px;top:300px;color:#000">31/01/1972</div>
<div class="c" style="left:540px;top:300px;color:#000;transform:scaleX(0.919);transform-origin:0 0">49 ANOS</div>
<div class="c" style="left:609px;top:300px;color:#000">9999999999</div>
<div class="c" style="left:733px;top:300px;color:#000;transform:scaleX(0.880);transform-origin:0 0">ASDFASDF</div>
<div class="c" style="left:916px;top:300px;color:#000">t@email.com</div>
<div class="a" style="left:171px;top:318px;width:1046px;height:18px;background:#f2f3f2"></div>
<div class="a" style="left:160px;top:317px;width:12px;height:19px;border:1px solid #6d6d6d;background:linear-gradient(#fdfdfd,#e6e7ea)"></div>
<div class="a" style="left:235px;top:318px;width:1px;height:18px;background:#e4e4e4"></div>
<div class="a" style="left:446px;top:318px;width:1px;height:18px;background:#e4e4e4"></div>
<div class="a" style="left:537px;top:318px;width:1px;height:18px;background:#e4e4e4"></div>
<div class="a" style="left:606px;top:318px;width:1px;height:18px;background:#e4e4e4"></div>
<div class="a" style="left:730px;top:318px;width:1px;height:18px;background:#e4e4e4"></div>
<div class="a" style="left:913px;top:318px;width:1px;height:18px;background:#e4e4e4"></div>
<div class="a" style="left:171px;top:335px;width:1046px;height:1px;background:#e8e8e8"></div>
<div class="c" style="left:174px;top:318px;color:#000">318077</div>
<div class="c" style="left:238px;top:318px;color:#000;transform:scaleX(0.899);transform-origin:0 0">TESTE OLIVEIRA MATRIZ</div>
<div class="c" style="left:449px;top:318px;color:#000">17/08/1991</div>
<div class="c" style="left:540px;top:318px;color:#000;transform:scaleX(0.919);transform-origin:0 0">29 ANOS</div>
<div class="c" style="left:609px;top:318px;color:#000">988778877</div>
<div class="c" style="left:733px;top:318px;color:#000;transform:scaleX(0.891);transform-origin:0 0">MARIA</div>
<div class="a" style="left:171px;top:336px;width:1046px;height:18px;background:#bccdee"></div>
<div class="a" style="left:160px;top:335px;width:12px;height:19px;border:1px solid #6d6d6d;background:linear-gradient(#fdfdfd,#e6e7ea)"></div>
<div class="a" style="left:235px;top:336px;width:1px;height:18px;background:#e4e4e4"></div>
<div class="a" style="left:446px;top:336px;width:1px;height:18px;background:#e4e4e4"></div>
<div class="a" style="left:537px;top:336px;width:1px;height:18px;background:#e4e4e4"></div>
<div class="a" style="left:606px;top:336px;width:1px;height:18px;background:#e4e4e4"></div>
<div class="a" style="left:730px;top:336px;width:1px;height:18px;background:#e4e4e4"></div>
<div class="a" style="left:913px;top:336px;width:1px;height:18px;background:#e4e4e4"></div>
<div class="a" style="left:171px;top:353px;width:1046px;height:1px;background:#e8e8e8"></div>
<div class="c" style="left:174px;top:336px;color:#000">318090</div>
<div class="c" style="left:238px;top:336px;color:#000;transform:scaleX(0.892);transform-origin:0 0">TESTE PACIENTE PROMEDICO PORTAL</div>
<div class="c" style="left:449px;top:336px;color:#000">01/01/2000</div>
<div class="c" style="left:540px;top:336px;color:#000;transform:scaleX(0.919);transform-origin:0 0">21 ANOS</div>
<div class="c" style="left:609px;top:336px;color:#000">62992997575</div>
<div class="c" style="left:916px;top:336px;color:#000">beto@pmedico.com</div>
<div class="a" style="left:171px;top:354px;width:1046px;height:18px;background:#f2f3f2"></div>
<div class="a" style="left:160px;top:353px;width:12px;height:19px;border:1px solid #6d6d6d;background:linear-gradient(#fdfdfd,#e6e7ea)"></div>
<div class="a" style="left:235px;top:354px;width:1px;height:18px;background:#e4e4e4"></div>
<div class="a" style="left:446px;top:354px;width:1px;height:18px;background:#e4e4e4"></div>
<div class="a" style="left:537px;top:354px;width:1px;height:18px;background:#e4e4e4"></div>
<div class="a" style="left:606px;top:354px;width:1px;height:18px;background:#e4e4e4"></div>
<div class="a" style="left:730px;top:354px;width:1px;height:18px;background:#e4e4e4"></div>
<div class="a" style="left:913px;top:354px;width:1px;height:18px;background:#e4e4e4"></div>
<div class="a" style="left:171px;top:371px;width:1046px;height:1px;background:#e8e8e8"></div>
<div class="c" style="left:238px;top:354px;color:#000;transform:scaleX(0.910);transform-origin:0 0">SOCIAL - SIVIRINA KATIAFLAVIA DA</div>
<div class="c" style="left:449px;top:354px;color:#000">20/01/1995</div>
<div class="c" style="left:540px;top:354px;color:#000;transform:scaleX(0.919);transform-origin:0 0">26 ANOS</div>
<div class="c" style="left:609px;top:354px;color:#000">556299999999</div>
<div class="c" style="left:733px;top:354px;color:#000;transform:scaleX(0.886);transform-origin:0 0">MAE TESTE</div>
<div class="a" style="left:171px;top:372px;width:1046px;height:18px;background:#bccdee"></div>
<div class="a" style="left:160px;top:371px;width:12px;height:19px;border:1px solid #6d6d6d;background:linear-gradient(#fdfdfd,#e6e7ea)"></div>
<div class="a" style="left:235px;top:372px;width:1px;height:18px;background:#e4e4e4"></div>
<div class="a" style="left:446px;top:372px;width:1px;height:18px;background:#e4e4e4"></div>
<div class="a" style="left:537px;top:372px;width:1px;height:18px;background:#e4e4e4"></div>
<div class="a" style="left:606px;top:372px;width:1px;height:18px;background:#e4e4e4"></div>
<div class="a" style="left:730px;top:372px;width:1px;height:18px;background:#e4e4e4"></div>
<div class="a" style="left:913px;top:372px;width:1px;height:18px;background:#e4e4e4"></div>
<div class="a" style="left:171px;top:389px;width:1046px;height:1px;background:#e8e8e8"></div>
<div class="c" style="left:174px;top:372px;color:#000">318072</div>
<div class="c" style="left:238px;top:372px;color:#000;transform:scaleX(0.886);transform-origin:0 0">TESTE TES</div>
<div class="c" style="left:449px;top:372px;color:#000">01/01/1990</div>
<div class="c" style="left:540px;top:372px;color:#000;transform:scaleX(0.919);transform-origin:0 0">31 ANOS</div>
<div class="c" style="left:609px;top:372px;color:#000">(55)6299-9999</div>
<div class="c" style="left:733px;top:372px;color:#000;transform:scaleX(0.880);transform-origin:0 0">SDAFASDFSD</div>
<div class="c" style="left:916px;top:372px;color:#000">testetes@teste.com.br</div>
<div class="a" style="left:171px;top:390px;width:1046px;height:18px;background:#f2f3f2"></div>
<div class="a" style="left:160px;top:389px;width:12px;height:19px;border:1px solid #6d6d6d;background:linear-gradient(#fdfdfd,#e6e7ea)"></div>
<div class="a" style="left:235px;top:390px;width:1px;height:18px;background:#e4e4e4"></div>
<div class="a" style="left:446px;top:390px;width:1px;height:18px;background:#e4e4e4"></div>
<div class="a" style="left:537px;top:390px;width:1px;height:18px;background:#e4e4e4"></div>
<div class="a" style="left:606px;top:390px;width:1px;height:18px;background:#e4e4e4"></div>
<div class="a" style="left:730px;top:390px;width:1px;height:18px;background:#e4e4e4"></div>
<div class="a" style="left:913px;top:390px;width:1px;height:18px;background:#e4e4e4"></div>
<div class="a" style="left:171px;top:407px;width:1046px;height:1px;background:#e8e8e8"></div>
<div class="c" style="left:174px;top:390px;color:#000">318101</div>
<div class="c" style="left:238px;top:390px;color:#000;transform:scaleX(0.883);transform-origin:0 0">TESTE TTEESSTTEE</div>
<div class="c" style="left:449px;top:390px;color:#000">01/01/1982</div>
<div class="c" style="left:540px;top:390px;color:#000;transform:scaleX(0.919);transform-origin:0 0">39 ANOS</div>
<div class="a" style="left:1217px;top:210px;width:1px;height:198px;background:#e0e0e0"></div>
<svg class="a" style="left:162px;top:250px" width="8" height="10"><path d="M1.5 1 L6 5 L1.5 9" stroke="#5a5a8a" stroke-width="1.8" fill="none"/></svg>
<div class="a" style="left:201px;top:108px;width:86px;height:32.5px;border:3px solid #f23d45;box-shadow:1px 2px 3px rgba(0,0,0,.28), inset 1px 2px 4px rgba(0,0,0,.25)"></div>
<div class="a" style="left:2px;top:142px;width:332px;height:44px;border:3px solid #f23d45;box-shadow:1px 2px 3px rgba(0,0,0,.28), inset 1px 2px 4px rgba(0,0,0,.25)"></div>
<div class="a" style="left:532px;top:140px;width:130px;height:46px;border:3px solid #f23d45;box-shadow:1px 2px 3px rgba(0,0,0,.28), inset 1px 2px 4px rgba(0,0,0,.25)"></div>
<div class="a" style="left:156px;top:242px;width:885px;height:27px;border:3px solid #f23d45;box-shadow:1px 2px 3px rgba(0,0,0,.28), inset 1px 2px 4px rgba(0,0,0,.25)"></div>
<svg class="a" style="left:137.8px;top:363.5px" width="14" height="22" viewBox="0 0 14 22"><path d="M0.5 0.5 L0.5 16 L4 12.5 L6.8 18.8 L9.3 17.8 L6.6 11.6 L11.8 11.6 Z" fill="#fff" stroke="#000" stroke-width="1"/></svg>
<div class="a" style="left:2.5px;top:329px;width:160.0px;height:52px;border:3.5px solid #f23d45;box-shadow:1px 2px 3px rgba(0,0,0,.28), inset 1px 2px 4px rgba(0,0,0,.25)"></div>
<div class="a" style="left:277px;top:85.5px;width:40px;height:40px;border-radius:50%;background:#fb4444;box-shadow:1px 2px 4px rgba(0,0,0,.35)"></div>
<div class="a" style="left:277px;top:85.5px;width:40px;height:40px;color:#fff;font-size:30px;line-height:41px;text-align:center">3</div>
<div class="a" style="left:87px;top:158px;width:40px;height:40px;border-radius:50%;background:#fb4444;box-shadow:1px 2px 4px rgba(0,0,0,.35)"></div>
<div class="a" style="left:87px;top:158px;width:40px;height:40px;color:#fff;font-size:30px;line-height:41px;text-align:center">4</div>
<div class="a" style="left:660px;top:151px;width:40px;height:40px;border-radius:50%;background:#fb4444;box-shadow:1px 2px 4px rgba(0,0,0,.35)"></div>
<div class="a" style="left:660px;top:151px;width:40px;height:40px;color:#fff;font-size:30px;line-height:41px;text-align:center">5</div>
<div class="a" style="left:386.5px;top:243.5px;width:40px;height:40px;border-radius:50%;background:#fb4444;box-shadow:1px 2px 4px rgba(0,0,0,.35)"></div>
<div class="a" style="left:386.5px;top:243.5px;width:40px;height:40px;color:#fff;font-size:30px;line-height:41px;text-align:center">6</div>
<div class="a" style="left:153px;top:343.5px;width:40px;height:40px;border-radius:50%;background:#fb4444;box-shadow:1px 2px 4px rgba(0,0,0,.35)"></div>
<div class="a" style="left:153px;top:343.5px;width:40px;height:40px;color:#fff;font-size:30px;line-height:41px;text-align:center">7</div>
</body></html>
